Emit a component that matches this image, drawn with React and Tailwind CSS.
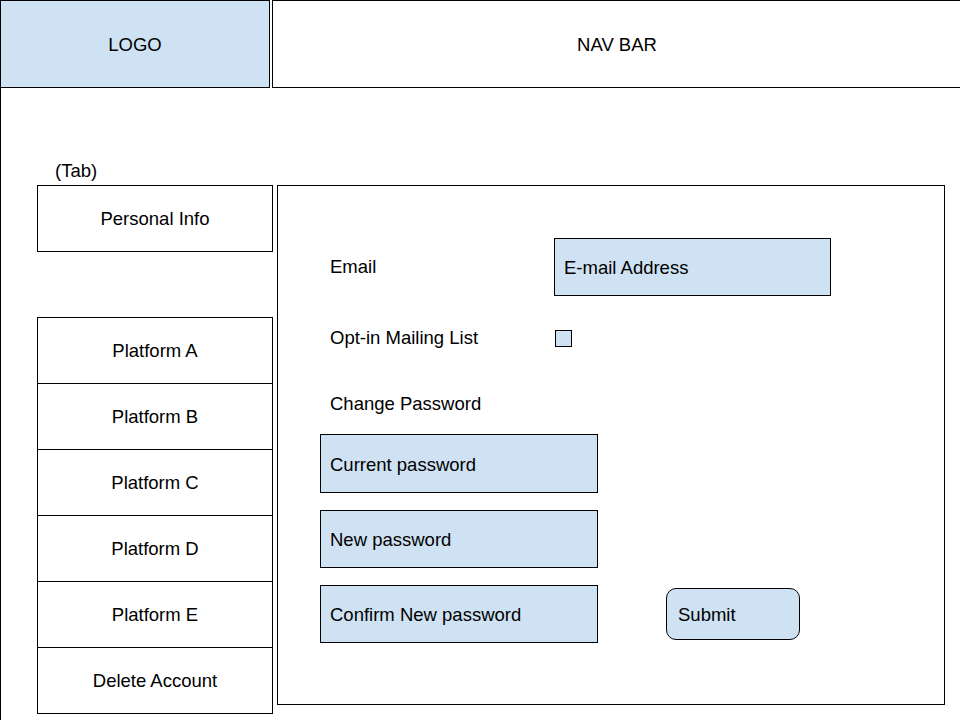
const platforms = ["Platform A", "Platform B", "Platform C", "Platform D", "Platform E", "Delete Account"];

const fieldBox = "border border-black bg-[#cfe2f3] flex items-center pt-[2px]";

export default function App() {
  return (
    <div className="w-[960px] h-[720px] overflow-hidden bg-white text-black text-[18.5px] leading-[20px] font-['Liberation_Sans',Arial,sans-serif]">
      {/* header */}
      <div className="flex h-[88px]">
        <div className="shrink-0 w-[270px] h-[88px] pt-px bg-[#cfe2f3] border border-black flex items-center justify-center">
          LOGO
        </div>
        <div className="shrink-0 w-[700px] h-[88px] pt-px ml-[2px] border border-black flex items-center">
          <span className="w-[688px] text-center">NAV BAR</span>
        </div>
      </div>

      {/* body */}
      <div className="h-[632px] border-l border-black flex pl-[36px] pt-[70px]">
        <div className="w-[236px] flex flex-col">
          <div className="h-[27px] pl-[18px] pt-[3px]">(Tab)</div>
          <div className="h-[67px] border border-black flex items-center justify-center">
            Personal Info
          </div>
          <div className="mt-[65px] flex flex-col">
            {platforms.map((label) => (
              <div
                key={label}
                className="h-[67px] -mt-px first:mt-0 pt-px border border-black flex items-center justify-center"
              >
                {label}
              </div>
            ))}
          </div>
        </div>

        <div className="ml-[4px] mt-[27px] w-[668px] h-[520px] border border-black pl-[42px] pt-[52px] flex flex-col">
          <div className="flex items-center">
            <span className="w-[234px] pl-[10px]">Email</span>
            <div className={`${fieldBox} w-[277px] h-[58px] pl-[9px]`}>E-mail Address</div>
          </div>

          <div className="flex items-center mt-[32px]">
            <span className="w-[235px] pl-[10px]">Opt-in Mailing List</span>
            <div className="w-[17px] h-[17px] border border-black bg-[#cfe2f3]" />
          </div>

          <div className="mt-[46px] pl-[10px]">Change Password</div>

          <div className={`${fieldBox} mt-[20px] w-[278px] h-[59px] pl-[9px]`}>Current password</div>
          <div className={`${fieldBox} mt-[17px] w-[278px] h-[58px] pl-[9px]`}>New password</div>

          <div className="flex items-center mt-[17px]">
            <div className={`${fieldBox} w-[278px] h-[58px] pl-[9px]`}>Confirm New password</div>
            <button className="ml-[68px] w-[134px] h-[52px] pt-[2px] rounded-[10px] border border-black bg-[#cfe2f3] text-left pl-[11px]">
              Submit
            </button>
          </div>
        </div>
      </div>
    </div>
  );
}
